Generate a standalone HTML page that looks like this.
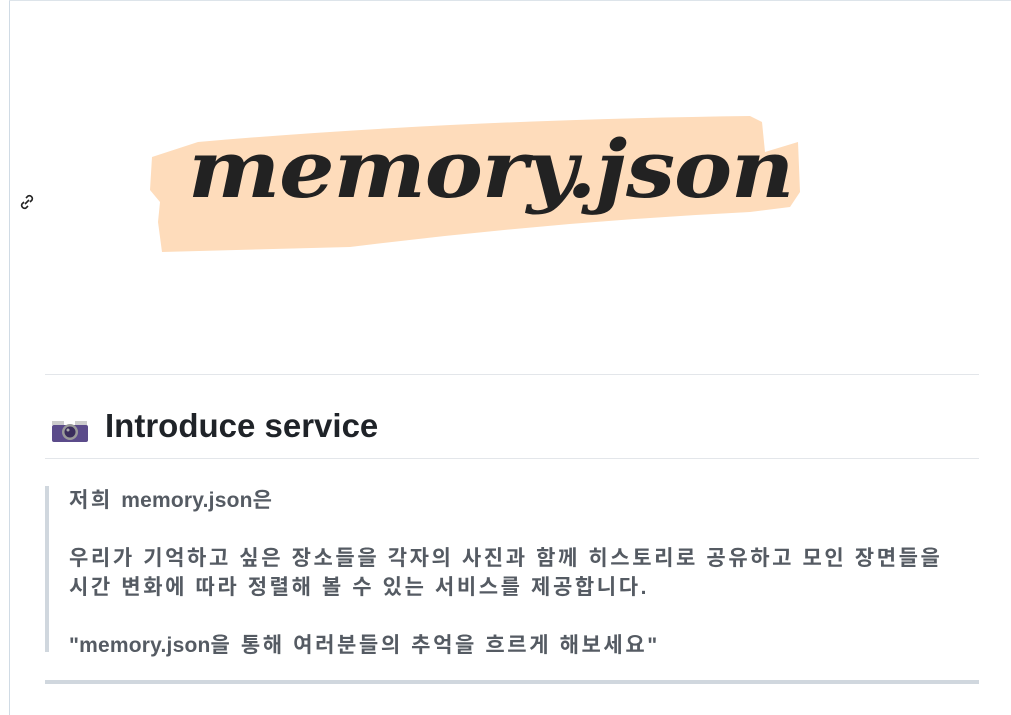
<!DOCTYPE html>
<html><head><meta charset="utf-8"><style>
html,body{margin:0;padding:0;background:#fff;width:1011px;height:715px;overflow:hidden;position:relative;font-family:"Liberation Sans","Noto Sans CJK KR",sans-serif}
.lb{position:absolute;left:9px;top:0;width:1px;height:715px;background:#d0dbe5}
.tb{position:absolute;left:9px;top:0;width:1002px;height:1px;background:#dde4ea}
.hr{position:absolute;left:45px;width:934px;height:1px;background:#e3e6ea}
.logo{position:absolute;left:188px;top:122px;font-family:"DejaVu Serif",serif;font-style:italic;font-weight:bold;font-size:80px;color:#222;letter-spacing:-1px;transform:scaleX(1.09);transform-origin:left}
h2{position:absolute;left:105px;top:407px;margin:0;font-size:33px;font-weight:bold;color:#1f2328;font-family:"Liberation Sans",sans-serif}
.bq{position:absolute;left:45px;top:486px;height:166px;border-left:4px solid #d0d7de;padding-left:20px;color:#555b63;font-size:21px;letter-spacing:2.6px;font-weight:bold;line-height:29px}
.bq p{margin:0}
.l{letter-spacing:0.2px}
</style></head><body>
<div class="lb"></div><div class="tb"></div>
<svg style="position:absolute;left:18px;top:193px" width="18" height="18" viewBox="0 0 18 18" fill="none" stroke="#222" stroke-width="1.6"><path d="M8 5l2-2a3 3 0 014 4l-2 2M10 13l-2 2a3 3 0 01-4-4l2-2M7 11l4-4"/></svg>
<svg style="position:absolute;left:150px;top:112px" width="650" height="145" viewBox="0 0 650 145"><path d="M48 30 Q300 8 600 4 L612 10 615 40 648 30 650 80 640 95 L600 100 Q400 110 200 135 L12 140 8 110 10 90 0 78 2 45 Z" fill="#fedcbb"/></svg>
<div class="logo">memory.json</div>
<div class="hr" style="top:374px"></div>
<svg style="position:absolute;left:51px;top:418px" width="38" height="26" viewBox="0 0 38 26"><rect x="1" y="3" width="12" height="4" fill="#ccc"/><rect x="24" y="3" width="12" height="4" fill="#ccc"/><rect x="1" y="7" width="36" height="17" rx="2" fill="#5b4b8a"/><circle cx="19" cy="14" r="8" fill="#999"/><circle cx="19" cy="14" r="5.5" fill="#3a2d5c"/><circle cx="17" cy="12" r="1.5" fill="#aaa"/></svg>
<h2>Introduce service</h2>
<div class="hr" style="top:458px"></div>
<div class="bq">
<p>저희 <span class="l">memory.json</span>은</p>
<p>&nbsp;</p>
<p>우리가 기억하고 싶은 장소들을 각자의 사진과 함께 히스토리로 공유하고 모인 장면들을<br>시간 변화에 따라 정렬해 볼 수 있는 서비스를 제공합니다.</p>
<p>&nbsp;</p>
<p><span class="l">"memory.json</span>을 통해 여러분들의 추억을 흐르게 해보세요<span class="l">"</span></p>
</div>
<div class="hr" style="top:680px;height:4px;background:#d0d7de"></div>
</body></html>
